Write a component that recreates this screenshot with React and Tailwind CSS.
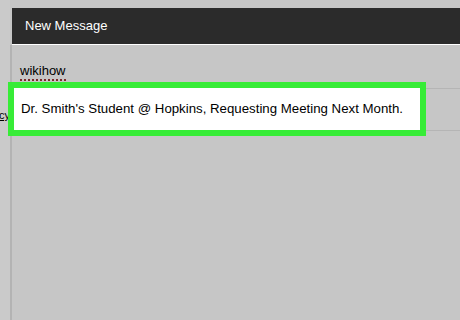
import React from 'react';

const App = () => {
    return (
        <div className="w-[460px] h-[320px] bg-[#c6c6c6] flex overflow-hidden font-['Liberation_Sans',Arial,sans-serif]">
            {/* left strip with clipped link */}
            <div className="w-[10px] shrink-0 bg-[#cacaca] flex flex-col">
                <div className="h-[108px] shrink-0"></div>
                <div className="flex justify-end overflow-hidden">
                    <a className="text-[11px] leading-[14px] text-black underline whitespace-nowrap">Privacy</a>
                </div>
            </div>
            <div className="w-[2px] shrink-0 mt-[45px] bg-[#b3b3b3]"></div>

            <div className="flex-1 flex flex-col pt-[8px]">
                {/* header */}
                <div className="h-[37px] shrink-0 bg-[#2b2b2b] border-b border-white flex items-center pl-[13px]">
                    <span className="text-white text-[13px]">New Message</span>
                </div>

                {/* to field */}
                <div className="h-[43px] shrink-0 pl-[8px] pt-[13px]">
                    <span className="inline-block text-[13px] leading-[15px] text-black border-b-2 border-dotted border-[#7d2a2a] pb-[1px]">wikihow</span>
                </div>

                {/* subject row */}
                <div className="h-[43px] shrink-0 border-y border-[#b5b5b5]">
                    <div className="relative -mt-[7px] -ml-[4px] w-[418px] h-[54px] border-[6px] border-[#37ec37] bg-white flex items-center pl-[7px]">
                        <span className="text-[13.25px] text-black whitespace-nowrap">Dr. Smith's Student @ Hopkins, Requesting Meeting Next Month.</span>
                    </div>
                </div>
            </div>
        </div>
    );
};

export default App;
